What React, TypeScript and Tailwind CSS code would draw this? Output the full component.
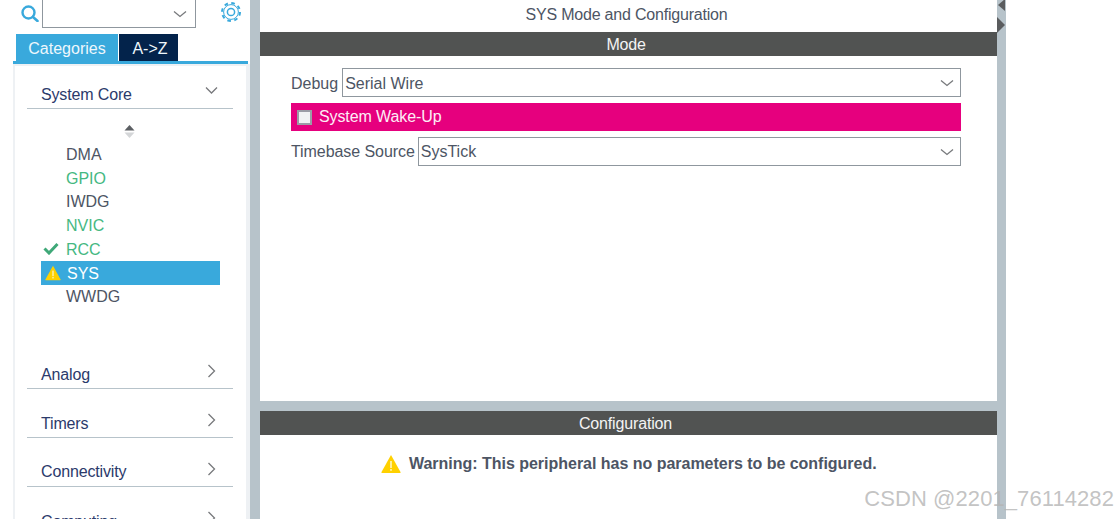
const items = [
  { label: 'DMA', color: 'text-[#4d5564]' },
  { label: 'GPIO', color: 'text-[#45b882]' },
  { label: 'IWDG', color: 'text-[#4d5564]' },
  { label: 'NVIC', color: 'text-[#45b882]' },
  { label: 'RCC', color: 'text-[#45b882]', status: 'ok' },
  { label: 'SYS', color: 'text-white', status: 'warn' },
  { label: 'WWDG', color: 'text-[#4d5564]' },
];

function WarnIcon({ size }: { size: number }) {
  return (
    <svg width={size} height={size} viewBox="0 0 20 20">
      <path d="M10 1 L19.5 18 Q20 19 19 19 L1 19 Q0 19 0.5 18 Z" fill="#ffd100" />
      <rect x="9.2" y="7" width="1.6" height="7" fill="#fff6c0" />
      <rect x="9.2" y="15" width="1.6" height="1.8" fill="#fff6c0" />
    </svg>
  );
}

function SelectChevron() {
  return (
    <svg width="14" height="8" viewBox="0 0 14 8" className="shrink-0">
      <path d="M1 1.5 L7 6.5 L13 1.5" fill="none" stroke="#77797c" strokeWidth="1.3" />
    </svg>
  );
}

function SectionRow({ title, open, textClass }: { title: string; open?: boolean; textClass?: string }) {
  return (
    <div className={`ml-[12px] w-[206px] flex items-end justify-between border-b border-[#b7c3ca] pb-[2px] pl-[14px] pr-[17px] ${open ? 'h-[43px]' : 'h-[49px]'}`}>
      <span className={`text-[16px] leading-[22px] tracking-[-0.15px] text-[#2b3a6b] ${textClass ?? ''}`}>{title}</span>
      {open ? (
        <svg width="13" height="9" viewBox="0 0 13 9" className="mb-[11px] -mr-[2px]">
          <path d="M1 1.5 L6.5 7 L12 1.5" fill="none" stroke="#77797c" strokeWidth="1.3" />
        </svg>
      ) : (
        <svg width="9" height="14" viewBox="0 0 9 14" className="mb-[8px]">
          <path d="M1.5 1 L7.5 7 L1.5 13" fill="none" stroke="#77797c" strokeWidth="1.3" />
        </svg>
      )}
    </div>
  );
}

function SelectBox({ value, textClass }: { value: string; textClass?: string }) {
  return (
    <div className="flex-1 h-[29px] border border-[#8f979e] flex items-center justify-between pl-[2px] pr-[6px] text-[16px] text-[#4d5564]">
      <span className={textClass}>{value}</span>
      <SelectChevron />
    </div>
  );
}

export default function App() {
  return (
    <div className="relative w-[1118px] h-[519px] overflow-hidden flex bg-white font-['Liberation_Sans',Arial,sans-serif]">
      {/* left panel */}
      <aside className="w-[250px] shrink-0 flex flex-col">
        <div className="h-[34px] flex">
          <div className="pl-[21px] pt-[5px] w-[42px]">
            <svg width="18" height="17" viewBox="0 0 18 17">
              <circle cx="7.5" cy="7.5" r="6" fill="none" stroke="#39a9dc" strokeWidth="2.4" />
              <path d="M12 12 L16.5 16" stroke="#39a9dc" strokeWidth="2.6" strokeLinecap="round" />
            </svg>
          </div>
          <div className="w-[154px] h-[28px] border border-t-0 border-[#8f979e] flex items-center justify-end pr-[8px] pt-[1px]">
            <SelectChevron />
          </div>
          <div className="pl-[25px] pt-[2px]">
            <svg width="20" height="20" viewBox="0 0 20 20">
              <circle cx="10" cy="10" r="9" fill="none" stroke="#39a9dc" strokeWidth="2" strokeDasharray="3.6 3.47" />
              <circle cx="10" cy="10" r="7.4" fill="none" stroke="#39a9dc" strokeWidth="1" />
              <circle cx="10" cy="10" r="3.6" fill="none" stroke="#39a9dc" strokeWidth="1.5" />
            </svg>
          </div>
        </div>
        <div className="h-[27px] flex pl-[16px] gap-[1px] text-[16px]">
          <div className="w-[102px] pt-[2px] bg-[#39a9dc] text-[#eef7fc] flex items-center justify-center">Categories</div>
          <div className="w-[59px] pt-[2px] pl-[3px] bg-[#03234b] text-[#eef7fc] flex items-center justify-center">A-&gt;Z</div>
        </div>
        <div className="ml-[13px] w-[235px] h-[3px] bg-[#39a9dc]" />
        <div className="flex-1 ml-[13px] w-[237px] bg-[#eef1f4] pl-[2px] pr-[4px] pt-[2px] min-h-0">
          <div className="bg-white h-full overflow-hidden">
            <SectionRow title="System Core" open />
            <div className="h-[231px] flex flex-col">
              <div className="flex justify-center pt-[16px] h-[33px] pr-[2px]">
                <svg width="11" height="13" viewBox="0 0 11 13">
                  <path d="M5.5 0 L10.5 5.5 L0.5 5.5 Z" fill="#5c5f63" />
                  <path d="M5.5 13 L10.5 7.5 L0.5 7.5 Z" fill="#d4d6d8" />
                </svg>
              </div>
              {items.map((item) => (
                <div
                  key={item.label}
                  className={`ml-[26px] w-[179px] h-[23.75px] pt-[2px] flex items-center text-[16px] relative ${item.color} ${item.status === 'warn' ? 'bg-[#39a9dc] pl-[26px]' : 'pl-[25px]'}`}
                >
                  {item.status === 'ok' && (
                    <svg width="16" height="13" viewBox="0 0 16 13" className="absolute left-[2px] top-[5px]">
                      <path d="M1.5 6.5 L6 11 L14.5 2" fill="none" stroke="#3fa878" strokeWidth="3" />
                    </svg>
                  )}
                  {item.status === 'warn' && (
                    <span className="absolute left-[4px] top-[4px]">
                      <WarnIcon size={16} />
                    </span>
                  )}
                  {item.label}
                </div>
              ))}
            </div>
            <SectionRow title="Analog" />
            <SectionRow title="Timers" />
            <SectionRow title="Connectivity" textClass="mb-[1px]" />
            <SectionRow title="Computing" />
          </div>
        </div>
      </aside>

      <div className="w-[10px] shrink-0 bg-[#b7c3ca]" />

      {/* main panel */}
      <main className="w-[737px] shrink-0 flex flex-col text-[16px]">
        <div className="h-[32px] pb-[2px] pr-[4px] tracking-[-0.2px] flex items-center justify-center text-[#4d5564]">SYS Mode and Configuration</div>
        <div className="h-[24px] pt-[2px] pr-[5px] bg-[#515352] text-[#f4f4f4] tracking-[-0.2px] flex items-center justify-center">Mode</div>
        <div className="h-[345px] pt-[12px] pl-[31px] pr-[36px] flex flex-col">
          <div className="flex items-center gap-[4px] h-[29px]">
            <span className="text-[#4d5564] pt-[2px]">Debug</span>
            <SelectBox value="Serial Wire" textClass="pt-[2px]" />
          </div>
          <div className="mt-[6px] h-[28px] bg-[#e6007e] flex items-center pl-[6px] gap-[7px] text-[#fdeef6]">
            <div className="w-[15px] h-[15px] bg-[#f0f2f4] border-2 border-[#9a9ca6]" />
            <span className="tracking-[-0.1px]">System Wake-Up</span>
          </div>
          <div className="mt-[6px] flex items-center gap-[3px] h-[29px]">
            <span className="text-[#4d5564] tracking-[-0.07px]">Timebase Source</span>
            <SelectBox value="SysTick" />
          </div>
        </div>
        <div className="h-[10px] bg-[#b7c3ca]" />
        <div className="h-[24px] pt-[2px] bg-[#515352] text-[#f4f4f4] tracking-[-0.15px] flex items-center justify-center pr-[6px]">Configuration</div>
        <div className="flex items-center pt-[17px] pl-[121px] gap-[8px] font-bold text-[#4d5564]">
          <WarnIcon size={20} />
          <span className="tracking-[-0.02px]">Warning: This peripheral has no parameters to be configured.</span>
        </div>
      </main>

      {/* right splitter */}
      <div className="w-[9px] shrink-0 bg-[#b7c3ca] flex flex-col items-center">
        <svg width="9" height="34" viewBox="0 0 9 34">
          <path d="M8 -1 L1 5 L8 11 Z" fill="#5a5c5e" />
          <path d="M0 17 L8 25 L0 33 Z" fill="#5a5c5e" />
        </svg>
      </div>

      <div className="absolute right-[4px] bottom-[7px] text-[22px] leading-[26px] tracking-[0.08px] text-[#b4b4b4]/80">CSDN @2201_76114282</div>
    </div>
  );
}
